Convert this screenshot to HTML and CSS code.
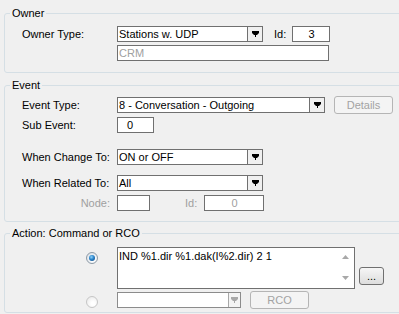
FILE: index.html
```html
<!DOCTYPE html>
<html lang="en">
<head>
    <meta charset="UTF-8">
    <title>Event Action</title>
    <link rel="stylesheet" href="styles.css">
</head>
<body>
    <div class="dialog">
        <fieldset class="group g-owner">
            <legend>Owner</legend>
            <div class="row h16">
                <span class="lbl">Owner Type:</span>
                <div class="combo w-owner">
                    <span class="val">Stations w. UDP</span>
                    <span class="drop"><svg width="7" height="6" viewBox="0 0 7 6"><path d="M0 0H7V2L5 4H4V6H3V4H2L0 2Z"/></svg></span>
                </div>
                <span class="id-lbl">Id:</span>
                <div class="tb w-id center">3</div>
            </div>
            <div class="row h16 mt3">
                <span class="lbl"></span>
                <div class="tb w-crm muted">CRM</div>
            </div>
        </fieldset>

        <fieldset class="group g-event">
            <legend>Event</legend>
            <div class="row h18">
                <span class="lbl">Event Type:</span>
                <div class="combo w-event">
                    <span class="val">8 - Conversation - Outgoing</span>
                    <span class="drop"><svg width="7" height="6" viewBox="0 0 7 6"><path d="M0 0H7V2L5 4H4V6H3V4H2L0 2Z"/></svg></span>
                </div>
                <button class="btn disabled w-details">Details</button>
            </div>
            <div class="row h16 mt3">
                <span class="lbl">Sub Event:</span>
                <div class="tb w-sub pad9">0</div>
            </div>
            <div class="row h16 mt16">
                <span class="lbl">When Change To:</span>
                <div class="combo w-owner">
                    <span class="val">ON or OFF</span>
                    <span class="drop"><svg width="7" height="6" viewBox="0 0 7 6"><path d="M0 0H7V2L5 4H4V6H3V4H2L0 2Z"/></svg></span>
                </div>
            </div>
            <div class="row h16 mt10">
                <span class="lbl">When Related To:</span>
                <div class="combo w-owner">
                    <span class="val">All</span>
                    <span class="drop"><svg width="7" height="6" viewBox="0 0 7 6"><path d="M0 0H7V2L5 4H4V6H3V4H2L0 2Z"/></svg></span>
                </div>
            </div>
            <div class="row h16 mt4">
                <span class="lbl right muted">Node:</span>
                <div class="tb w-node"></div>
                <span class="id-lbl node-id muted">Id:</span>
                <div class="tb w-relid center muted">0</div>
            </div>
        </fieldset>

        <fieldset class="group g-action">
            <legend>Action: Command or RCO</legend>
            <div class="row h42">
                <span class="lbl radio-cell"><span class="radio on"></span></span>
                <div class="memo">
                    <div class="memo-text">IND %1.dir %1.dak(I%2.dir) 2 1</div>
                    <div class="memo-scroll">
                        <svg width="7" height="4" viewBox="0 0 7 4"><path d="M0 4L3.5 0L7 4Z"/></svg>
                        <svg width="7" height="4" viewBox="0 0 7 4"><path d="M0 0L3.5 4L7 0Z"/></svg>
                    </div>
                </div>
                <button class="btn w-dots">...</button>
            </div>
            <div class="row h18 mt2">
                <span class="lbl radio-cell"><span class="radio off"></span></span>
                <div class="combo w-rco off">
                    <span class="val"></span>
                    <span class="drop"><svg width="7" height="6" viewBox="0 0 7 6"><path d="M0 0H7V2L5 4H4V6H3V4H2L0 2Z"/></svg></span>
                </div>
                <button class="btn disabled w-rcobtn">RCO</button>
            </div>
        </fieldset>
    </div>
</body>
</html>
```

FILE: styles.css
```css
body {
    margin: 0;
    background-color: #f0f0f0;
    font-family: "Liberation Sans", Arial, sans-serif;
    font-size: 11px;
    color: #000;
    overflow: hidden;
}

.dialog {
    width: 399px;
    height: 314px;
    overflow: hidden;
    padding: 7px 0 0 4px;
    box-sizing: border-box;
}

.group {
    width: 420px;
    box-sizing: border-box;
    margin: 0;
    padding: 0 0 0 5px;
    border: 1px solid #d5dfe5;
    border-radius: 3px;
    min-width: 0;
}

.group legend {
    padding: 0 2px;
    line-height: 12px;
    font-size: 11px;
}

.g-owner {
    padding-top: 7px;
    padding-bottom: 11px;
}

.g-event {
    margin-top: 6px;
    padding-top: 5px;
    padding-bottom: 10px;
}

.g-action {
    margin-top: 5px;
    padding-top: 8px;
    padding-bottom: 3px;
}

.row {
    display: flex;
    align-items: center;
    margin-left: 12px;
}

.h16 { height: 16px; }
.h18 { height: 18px; }
.h42 { height: 42px; align-items: flex-start; }

.mt2 { margin-top: 2px; }
.mt3 { margin-top: 3px; }
.mt4 { margin-top: 4px; }
.mt10 { margin-top: 10px; }
.mt16 { margin-top: 16px; }

.lbl {
    width: 95px;
    flex-shrink: 0;
    white-space: nowrap;
}

.lbl.right {
    text-align: right;
    padding-right: 7px;
    box-sizing: border-box;
}

.muted {
    color: #a0a0a0;
}

.center {
    justify-content: center;
}

.id-lbl {
    margin-left: 11px;
    width: 18px;
}

.node-id {
    margin-left: 35px;
    width: 19px;
}

/* text boxes */
.tb {
    display: flex;
    align-items: center;
    height: 16px;
    box-sizing: border-box;
    border: 1px solid #707070;
    background-color: #fff;
    padding-left: 1px;
    white-space: nowrap;
}

.tb.pad9 { padding-left: 9px; }

.w-id { width: 38px; }
.w-crm { width: 212px; }
.w-sub { width: 37px; }
.w-node { width: 33px; }
.w-relid { width: 60px; }

/* combo boxes */
.combo {
    display: flex;
    height: 16px;
    box-sizing: border-box;
    border: 1px solid #707070;
    background-color: #fff;
}

.combo .val {
    flex: 1;
    padding-left: 1px;
    line-height: 14px;
    white-space: nowrap;
    overflow: hidden;
}

.combo .drop {
    width: 14px;
    border-left: 1px solid #707070;
    background-color: #f0f0f0;
    display: flex;
    align-items: center;
    justify-content: center;
}

.combo .drop svg {
    fill: #000;
}

.combo.off {
    border-color: #8c8c8c;
}

.combo.off .drop {
    width: 11px;
    border-left-color: #a8a8a8;
    background-color: #f4f4f4;
}

.combo.off .drop svg {
    fill: #a8a8a8;
}

.w-owner { width: 146px; }
.w-event { width: 208px; }
.w-rco { width: 124px; }

/* buttons */
.btn {
    font-family: inherit;
    font-size: 11px;
    height: 18px;
    padding: 0;
    margin: 0;
    border: 1px solid #707070;
    border-radius: 3px;
    background: linear-gradient(#f6f6f6, #dddddd);
    color: #000;
    line-height: 14px;
}

.btn.disabled {
    border-color: #b5b5b5;
    background: #f4f4f4;
    color: #a3a3a3;
}

.w-details {
    width: 59px;
    margin-left: 9px;
}

.w-rcobtn {
    width: 59px;
    margin-left: 9px;
}

.w-dots {
    width: 25px;
    margin-left: 4px;
    margin-top: 20px;
    line-height: 10px;
}

/* radio buttons */
.radio-cell {
    display: flex;
    padding-left: 64px;
    box-sizing: border-box;
    align-self: flex-start;
    margin-top: 5px;
}

.radio {
    width: 12px;
    height: 12px;
    box-sizing: border-box;
    border-radius: 50%;
    border: 1px solid #8d9aa6;
    background: radial-gradient(circle at 60% 65%, #ffffff 20%, #d5dce3 90%);
    display: flex;
    align-items: center;
    justify-content: center;
}

.radio.on::after {
    content: "";
    width: 6px;
    height: 6px;
    border-radius: 50%;
    background: radial-gradient(circle at 40% 35%, #8fd3fb 0%, #2a83c9 45%, #0d3f77 100%);
}

.radio.off {
    border-color: #c6c6c6;
    background: radial-gradient(circle at 60% 65%, #ffffff 20%, #e8e8e8 90%);
}

/* command memo */
.memo {
    display: flex;
    width: 238px;
    height: 42px;
    box-sizing: border-box;
    border: 1px solid #707070;
    background-color: #fff;
}

.memo-text {
    flex: 1;
    padding: 2px 0 0 1px;
    line-height: 12px;
    white-space: nowrap;
}

.memo-scroll {
    width: 17px;
    display: flex;
    flex-direction: column;
    align-items: center;
    justify-content: space-between;
    padding: 7px 0 8px;
}

.memo-scroll svg {
    fill: #a8a8a8;
}
```
